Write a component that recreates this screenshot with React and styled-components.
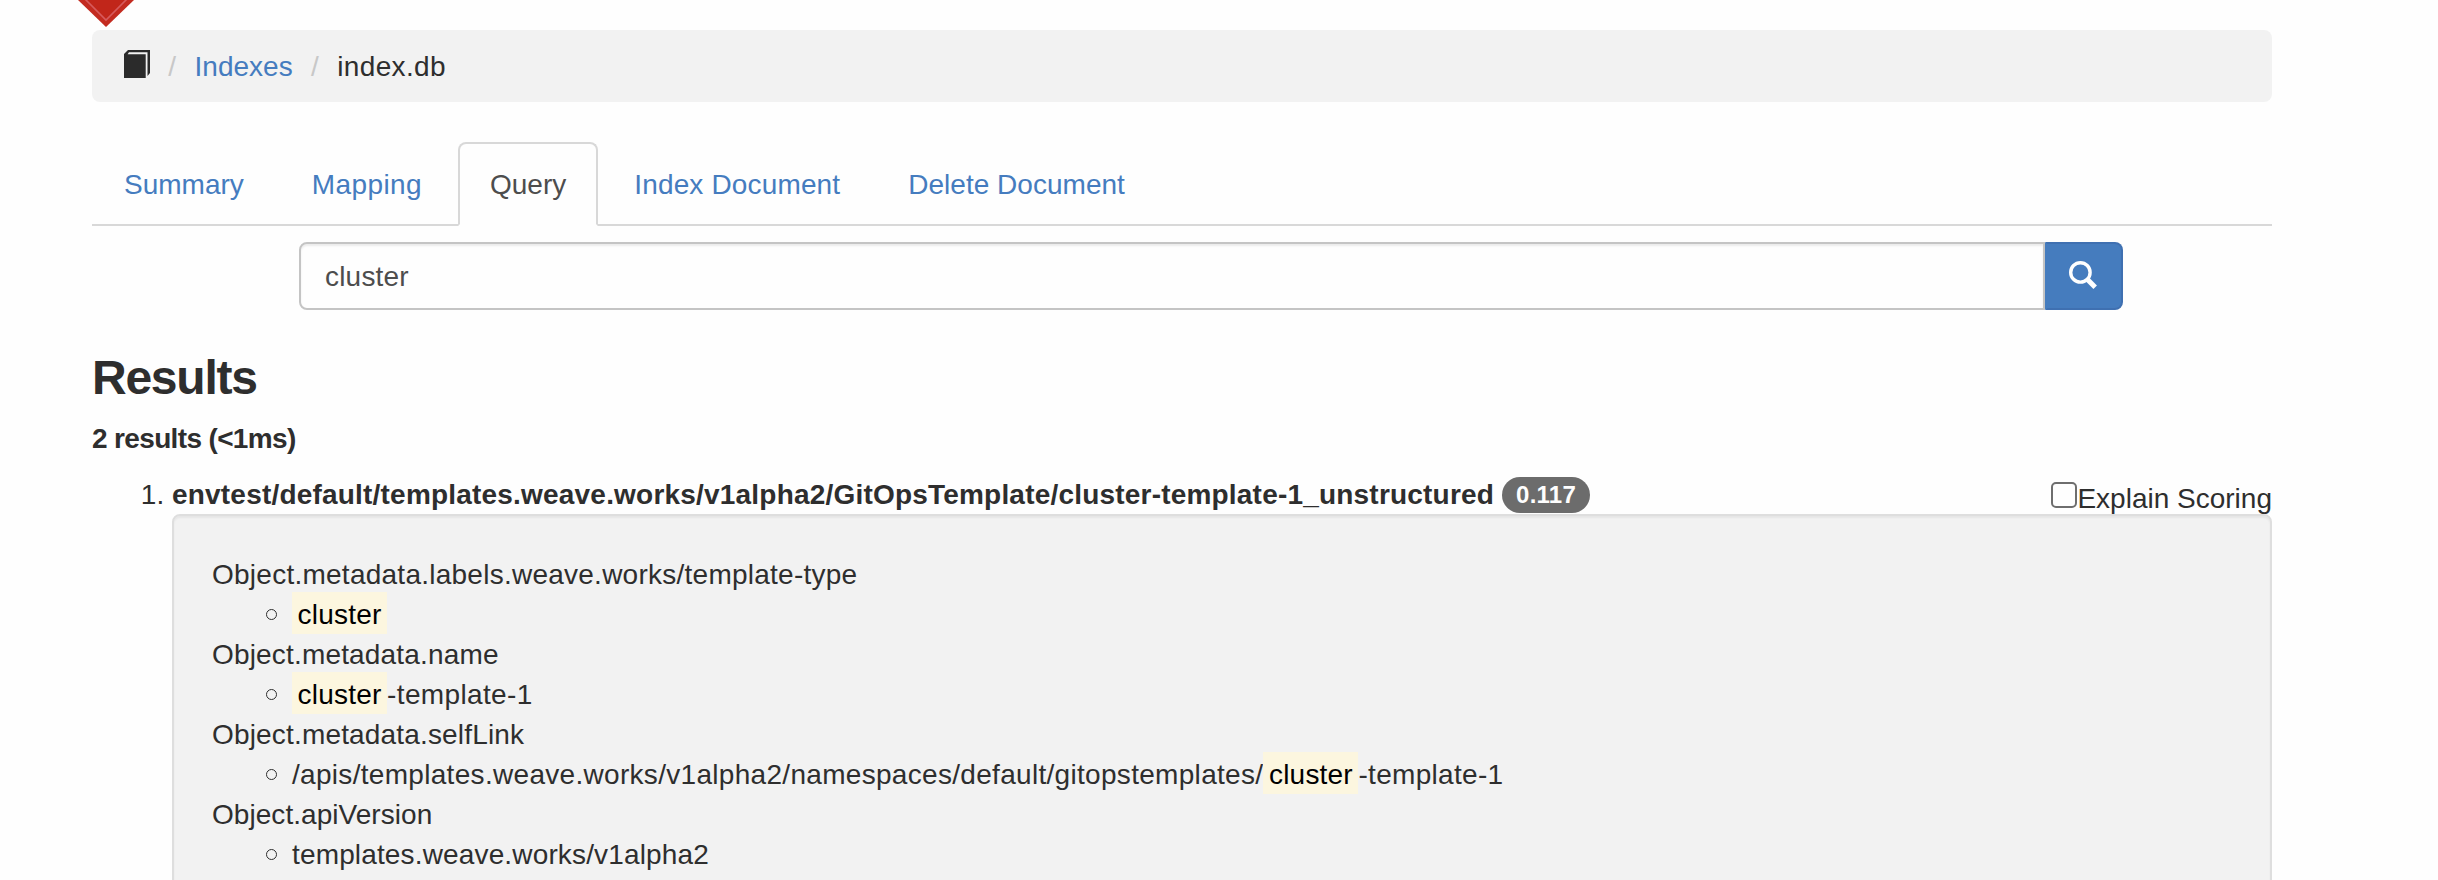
import React from 'react';
import styled, { createGlobalStyle } from 'styled-components';

const GlobalStyle = createGlobalStyle`
  *, *::before, *::after { box-sizing: border-box; }
  html, body { margin: 0; height: 880px; overflow: hidden; background: #fefefe; }
  body {
    font: 28px/40px "Helvetica Neue", Helvetica, "Liberation Sans", Arial, sans-serif;
    color: #2e2e2e;
  }
`;

const Page = styled.div`
  height: 880px;
  padding: 0 166px 0 92px;
  overflow: hidden;
`;

const Header = styled.header`
  height: 30px;
`;

const LogoTip = styled.svg`
  display: block;
  width: 56px;
  height: 28px;
  margin-left: -14px;
`;

const Breadcrumb = styled.ol`
  display: flex;
  height: 72px;
  margin: 0 0 40px;
  padding: 17px 32px 15px;
  list-style: none;
  background: #f2f2f2;
  border-radius: 8px;
`;

const Crumb = styled.li`
  display: flex;
  letter-spacing: ${(p) => p.$tracking || 0}px;
  &:not(:first-child)::before {
    content: "/";
    color: #c8c8c8;
    padding: 0 18.5px 0 18.3px;
    letter-spacing: 0;
  }
`;

const Link = styled.a`
  color: #457cbf;
  text-decoration: none;
`;

const BookIcon = styled.svg`
  display: block;
  width: 26px;
  height: 28px;
  margin-top: 3px;
`;

const Tabs = styled.ul`
  display: flex;
  height: 84px;
  margin: 0 0 16px;
  padding: 0;
  list-style: none;
  border-bottom: 2px solid #d8d8d8;
`;

const Tab = styled.li`
  height: 84px;
  margin-right: 4px;
  padding: 21px 30px 19px;
  border: 2px solid ${(p) => (p.$active ? '#d8d8d8' : 'transparent')};
  border-bottom-color: ${(p) => (p.$active ? '#fefefe' : 'transparent')};
  border-radius: 8px 8px 0 0;
  background: ${(p) => (p.$active ? '#fefefe' : 'none')};
  color: ${(p) => (p.$active ? '#4d4d4d' : '#457cbf')};
  letter-spacing: ${(p) => p.$tracking}px;
  white-space: nowrap;
`;

const SearchGroup = styled.form`
  display: flex;
  height: 68px;
  margin: 0 149px 0 207px;
`;

const SearchInput = styled.input`
  flex: 1;
  min-width: 0;
  padding: 13px 24px 11px;
  font: inherit;
  letter-spacing: 0.2px;
  color: #4d4d4d;
  background: #fefefe;
  border: 2px solid #c4c4c4;
  border-radius: 8px 0 0 8px;
  box-shadow: inset 0 2px 2px rgba(0, 0, 0, 0.075);
  outline: none;
`;

const SearchButton = styled.button`
  width: 78px;
  padding: 0 0 0 22px;
  background: #457cbe;
  border: 2px solid #3f70b1;
  border-left-color: #457cbe;
  border-radius: 0 8px 8px 0;
`;

const SearchIcon = styled.svg`
  display: block;
  width: 28px;
  height: 28px;
  margin-top: -3px;
`;

const Title = styled.h3`
  margin: 41px 0 19px;
  font-size: 48px;
  font-weight: 700;
  line-height: 53px;
  letter-spacing: -1.25px;
`;

const Summary = styled.h5`
  margin: 0 0 20px;
  font-size: 28px;
  font-weight: 700;
  line-height: 31px;
  letter-spacing: -0.65px;
`;

const Results = styled.ol`
  margin: 0;
  padding-left: 80px;
`;

const ResultHead = styled.div`
  display: flex;
  height: 40px;
`;

const DocumentId = styled.strong`
  padding-top: 1px;
  letter-spacing: 0.2px;
  white-space: nowrap;
`;

const Score = styled.span`
  align-self: flex-start;
  margin: 3px 0 0 8px;
  padding: 6px 14px;
  font-size: 24px;
  font-weight: 700;
  line-height: 24px;
  letter-spacing: 0.25px;
  color: #fefefe;
  background: #6c6c6c;
  border-radius: 20px;
`;

const Explain = styled.label`
  display: flex;
  margin-left: auto;
  padding-top: 5px;
`;

const Checkbox = styled.input`
  appearance: none;
  width: 26px;
  height: 26px;
  margin: 3px 0 0;
  background: #fefefe;
  border: 2px solid #6e6e6e;
  border-radius: 5px;
`;

const Well = styled.div`
  min-height: 440px;
  padding: 39px 38px 37px;
  background: #f2f2f2;
  border: 2px solid #dedede;
  border-radius: 8px;
  box-shadow: inset 0 2px 2px rgba(0, 0, 0, 0.05);
`;

const FieldName = styled.div`
  letter-spacing: ${(p) => p.$tracking}px;
`;

const Values = styled.ul`
  margin: 0;
  padding-left: 80px;
  list-style: none;
`;

const Value = styled.li`
  letter-spacing: ${(p) => p.$tracking}px;
  &::before {
    content: "";
    display: inline-block;
    width: 11px;
    height: 11px;
    margin: 0 15px 4px -26px;
    border: 1px solid #2e2e2e;
    border-radius: 50%;
  }
`;

const Mark = styled.mark`
  padding: 7px 5.6px 4px;
  letter-spacing: 0.2px;
  color: #000;
  background: #fcf6df;
`;

const TABS = [
  { label: 'Summary', tracking: 0 },
  { label: 'Mapping', tracking: 0.4 },
  { label: 'Query', tracking: 0 },
  { label: 'Index Document', tracking: 0.15 },
  { label: 'Delete Document', tracking: 0.02 },
];

const FIELDS = [
  {
    name: 'Object.metadata.labels.weave.works/template-type',
    nameTracking: 0.25,
    tracking: 0.2,
    hit: 'cluster',
  },
  {
    name: 'Object.metadata.name',
    nameTracking: 0.17,
    tracking: 0.36,
    hit: 'cluster',
    after: '-template-1',
  },
  {
    name: 'Object.metadata.selfLink',
    nameTracking: 0.17,
    tracking: 0.305,
    before: '/apis/templates.weave.works/v1alpha2/namespaces/default/gitopstemplates/',
    hit: 'cluster',
    after: '-template-1',
  },
  {
    name: 'Object.apiVersion',
    nameTracking: 0.05,
    tracking: 0.15,
    before: 'templates.weave.works/v1alpha2',
  },
];

export default function App() {
  return (
    <Page>
      <GlobalStyle />
      <Header>
        <LogoTip viewBox="0 0 56 28">
          <path d="M0 0H56L28 27Z" fill="#c32b20" />
          <path d="M7 -1L28 20L49 -1" fill="#c1261a" stroke="#d65a5c" strokeWidth="1.6" />
        </LogoTip>
      </Header>
      <Breadcrumb>
        <Crumb>
          <BookIcon viewBox="0 0 26 28" fill="#2b2b2b">
            <path d="M0 4L4 0H26V23L23.5 26V2.2H5L3.6 4.3H21.7V28H0Z" />
          </BookIcon>
        </Crumb>
        <Crumb><Link>Indexes</Link></Crumb>
        <Crumb $tracking={0.35}>index.db</Crumb>
      </Breadcrumb>
      <Tabs>
        {TABS.map((t) => (
          <Tab key={t.label} $active={t.label === 'Query'} $tracking={t.tracking}>{t.label}</Tab>
        ))}
      </Tabs>
      <SearchGroup>
        <SearchInput defaultValue="cluster" />
        <SearchButton type="button">
          <SearchIcon viewBox="0 0 28 28" fill="none" stroke="#fefefe">
            <circle cx="11.4" cy="11.4" r="9.7" strokeWidth="3.4" />
            <path d="M18 18L26.2 26.2" strokeWidth="5" />
          </SearchIcon>
        </SearchButton>
      </SearchGroup>
      <Title>Results</Title>
      <Summary>2 results (&lt;1ms)</Summary>
      <Results>
        <li>
          <ResultHead>
            <DocumentId>envtest/default/templates.weave.works/v1alpha2/GitOpsTemplate/cluster-template-1_unstructured</DocumentId>
            <Score>0.117</Score>
            <Explain><Checkbox type="checkbox" />Explain Scoring</Explain>
          </ResultHead>
          <Well>
            {FIELDS.map((f) => (
              <div key={f.name}>
                <FieldName $tracking={f.nameTracking}>{f.name}</FieldName>
                <Values>
                  <Value $tracking={f.tracking}>{f.before}{f.hit && <Mark>{f.hit}</Mark>}{f.after}</Value>
                </Values>
              </div>
            ))}
          </Well>
        </li>
      </Results>
    </Page>
  );
}
